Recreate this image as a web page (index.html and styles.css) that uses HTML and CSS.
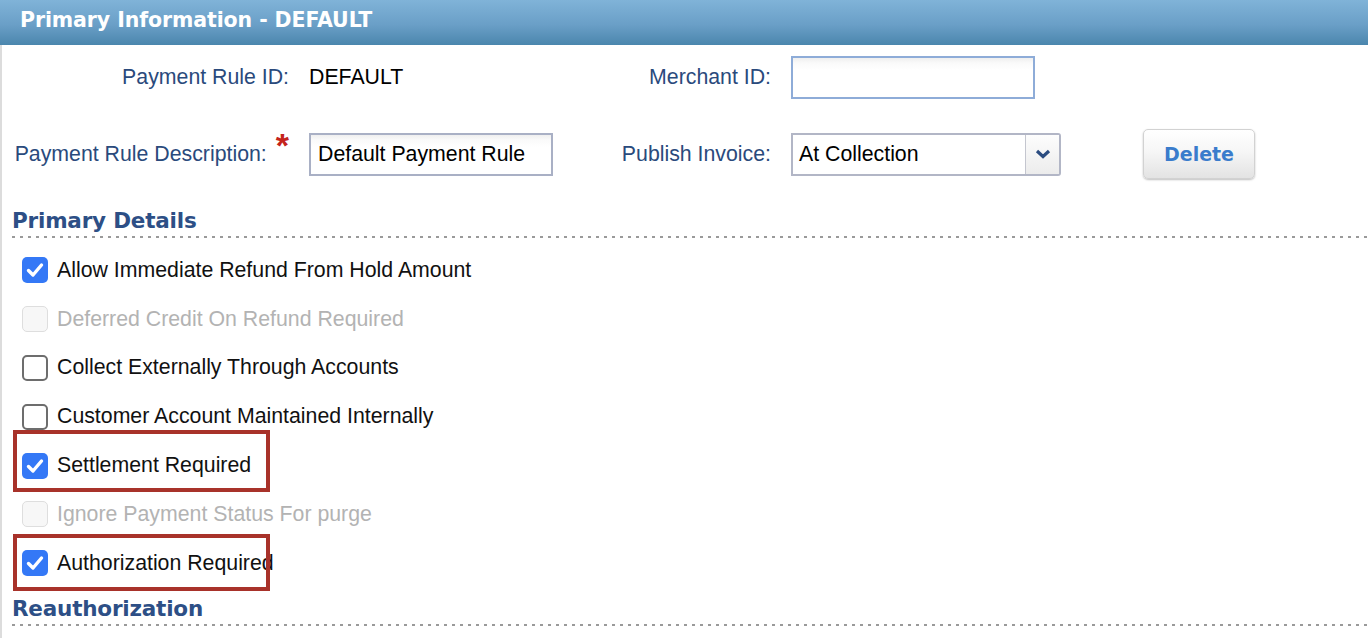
FILE: index.html
```html
<!DOCTYPE html>
<html lang="en">
<head>
<meta charset="utf-8">
<title>Primary Information - DEFAULT</title>
<link rel="stylesheet" href="styles.css">
</head>
<body>
<div class="panel">
  <div class="panel-header">Primary Information - DEFAULT</div>
  <div class="panel-body">
    <div class="form-grid">
      <div class="label">Payment Rule ID:</div>
      <div class="value">DEFAULT</div>
      <div class="label">Merchant ID:</div>
      <div class="field"><input class="text-input merchant" type="text"></div>
      <div></div>

      <div class="label">Payment Rule Description:<span class="req">*</span></div>
      <div class="field"><input class="text-input desc" type="text" value="Default Payment Rule"></div>
      <div class="label">Publish Invoice:</div>
      <div class="field">
        <div class="select">
          <span class="select-text">At Collection</span>
          <span class="select-btn">
            <svg width="16" height="10" viewBox="0 0 16 10"><path d="M2 2l6 5.5L14 2" fill="none" stroke="#2b4c80" stroke-width="3.2" stroke-linejoin="miter"/></svg>
          </span>
        </div>
      </div>
      <div class="field"><button class="btn" type="button">Delete</button></div>
    </div>

    <h2 class="section-title">Primary Details</h2>
    <ul class="checklist">
      <li class="check-item"><span class="cb checked"><svg viewBox="0 0 26 26"><path d="M6.5 13.5l4.5 4.5 8.5-10" /></svg></span><span class="cb-text">Allow Immediate Refund From Hold Amount</span></li>
      <li class="check-item disabled"><span class="cb"></span><span class="cb-text">Deferred Credit On Refund Required</span></li>
      <li class="check-item"><span class="cb"></span><span class="cb-text">Collect Externally Through Accounts</span></li>
      <li class="check-item"><span class="cb"></span><span class="cb-text">Customer Account Maintained Internally</span></li>
      <li class="check-item"><span class="annot annot-1"></span><span class="cb checked"><svg viewBox="0 0 26 26"><path d="M6.5 13.5l4.5 4.5 8.5-10" /></svg></span><span class="cb-text">Settlement Required</span></li>
      <li class="check-item disabled"><span class="cb"></span><span class="cb-text">Ignore Payment Status For purge</span></li>
      <li class="check-item"><span class="annot annot-2"></span><span class="cb checked"><svg viewBox="0 0 26 26"><path d="M6.5 13.5l4.5 4.5 8.5-10" /></svg></span><span class="cb-text">Authorization Required</span></li>
    </ul>
    <h2 class="section-title reauth">Reauthorization</h2>
  </div>
</div>
</body>
</html>
```

FILE: styles.css
```css
html, body {
  margin: 0;
  padding: 0;
  background: #ffffff;
}

body {
  font-family: "Liberation Sans", Arial, sans-serif;
  font-size: 21.3px;
  color: #000;
  overflow: hidden;
}

.panel {
  width: 1368px;
  height: 638px;
}

.panel-header {
  height: 45px;
  box-sizing: border-box;
  padding-left: 20px;
  background: linear-gradient(to bottom, #80b3d8 0%, #6a9fc7 55%, #4b86ad 100%);
  color: #ffffff;
  font-family: "DejaVu Sans", sans-serif;
  font-weight: bold;
  font-size: 20.5px;
  line-height: 40px;
  letter-spacing: -0.1px;
}

.panel-body {
  border-left: 2px solid #dcdcdc;
  height: 593px;
  box-sizing: border-box;
  padding: 11px 0 0 10px;
}

.form-grid {
  display: grid;
  grid-template-columns: 277px 243px 199px 270px auto;
  column-gap: 20px;
  row-gap: 30px;
  grid-template-rows: 43px 50px;
  align-items: center;
}

.label {
  text-align: right;
  color: #2a4a7c;
  white-space: nowrap;
}

.req {
  display: inline-block;
  color: #c4241c;
  font-weight: bold;
  font-size: 34px;
  line-height: 0;
  margin-left: 9px;
  vertical-align: baseline;
  position: relative;
  top: -4px;
}

.value {
  color: #000;
}

.field {
  display: flex;
  align-items: center;
}

.text-input {
  box-sizing: border-box;
  height: 43px;
  font-family: "Liberation Sans", Arial, sans-serif;
  font-size: 21.3px;
  color: #000;
  padding: 0 7px;
  outline: none;
  background: linear-gradient(to bottom, #efefef 0, #fafafa 5px, #ffffff 12px);
}

.merchant {
  width: 244px;
  border: 2px solid #8eacd8;
}

.desc {
  width: 244px;
  border: 2px solid #a9b0c5;
}

.select {
  box-sizing: border-box;
  width: 270px;
  height: 43px;
  border: 2px solid #b2b6c6;
  border-radius: 0 3px 3px 0;
  display: flex;
  align-items: stretch;
  background: #fff;
}

.select-text {
  flex: 1;
  display: flex;
  align-items: center;
  padding-left: 6px;
}

.select-btn {
  width: 33px;
  border-left: 1px solid #c4c6cf;
  background: linear-gradient(to bottom, #fdfdfd, #ececec);
  display: flex;
  align-items: center;
  justify-content: center;
}

.btn {
  margin-left: 62px;
  width: 112px;
  height: 50px;
  border: 1px solid #d2d2d2;
  border-radius: 5px;
  background: linear-gradient(to bottom, #ffffff 0%, #f6f6f6 45%, #e3e3e3 100%);
  box-shadow: 0 1px 2px rgba(0, 0, 0, 0.25);
  color: #3a7ccc;
  font-family: "DejaVu Sans", sans-serif;
  font-weight: bold;
  font-size: 19px;
  padding: 0;
  cursor: pointer;
}

.section-title {
  margin: 29px 0 0 0;
  height: 30px;
  padding-top: 0;
  color: #2d4f86;
  font-family: "DejaVu Sans", sans-serif;
  font-weight: bold;
  font-size: 21.5px;
  line-height: 26px;
  letter-spacing: -0.2px;
  background-image: repeating-linear-gradient(to right, #9a9a9a 0, #9a9a9a 3px, transparent 3px, transparent 8px);
  background-size: 100% 2px;
  background-repeat: no-repeat;
  background-position: 0 28px;
}

.section-title.reauth {
  margin-top: 8px;
}

.checklist {
  list-style: none;
  margin: 8px 0 0 0;
  padding: 0;
}

.check-item {
  position: relative;
  height: 48.8px;
  display: flex;
  align-items: center;
  color: #111;
}

.cb {
  box-sizing: border-box;
  width: 26px;
  height: 26px;
  margin-left: 10px;
  margin-right: 9px;
  border: 2px solid #6d6d6d;
  border-radius: 5px;
  background: #fff;
  display: flex;
  align-items: center;
  justify-content: center;
  flex: none;
}

.cb.checked {
  border: none;
  background: #3478f6;
}

.cb svg {
  width: 26px;
  height: 26px;
}

.cb svg path {
  fill: none;
  stroke: #ffffff;
  stroke-width: 3.4;
  stroke-linecap: round;
  stroke-linejoin: round;
}

.check-item.disabled {
  color: #b3b3b3;
}

.check-item.disabled .cb {
  border: 1.5px solid #dedede;
  background: #f7f7f7;
}

.annot {
  position: absolute;
  left: 1px;
  width: 257px;
  box-sizing: border-box;
  border: 4px solid #a8322a;
  pointer-events: none;
}

.annot-1 {
  top: -11px;
  height: 62px;
}

.annot-2 {
  top: -5px;
  height: 57px;
}
```
